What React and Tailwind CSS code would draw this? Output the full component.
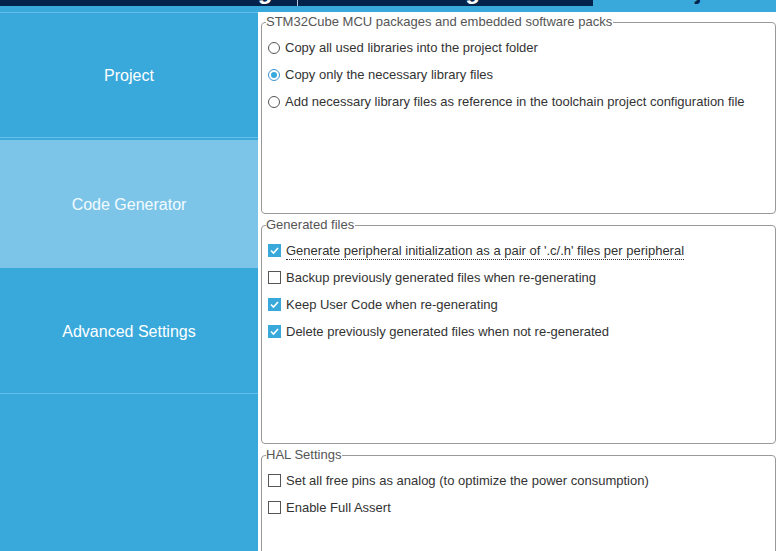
import React from "react";

const FONT = { fontFamily: '"Liberation Sans", Arial, sans-serif' };

function Radio({ checked, label }) {
  return (
    <div className="flex h-[27px] items-center gap-[5px] pl-[2px]">
      {checked ? (
        <span className="flex h-[12px] w-[12px] shrink-0 items-center justify-center rounded-full border border-[#3f93d2] bg-white">
          <span className="h-[6px] w-[6px] rounded-full bg-[#39a9db]" />
        </span>
      ) : (
        <span className="h-[12px] w-[12px] shrink-0 rounded-full border border-[#555555] bg-white" />
      )}
      <span className="whitespace-nowrap text-[13px] leading-[16px] text-[#333333]">{label}</span>
    </div>
  );
}

function Check({ checked, label, focused }) {
  return (
    <div className="flex h-[27px] items-center gap-[5px] pl-[2px]">
      {checked ? (
        <span className="flex h-[13px] w-[13px] shrink-0 items-center justify-center bg-[#39a9db]">
          <svg width="11" height="11" viewBox="0 0 11 11">
            <path d="M2 5.5 L4.5 8 L9 3" fill="none" stroke="#ffffff" strokeWidth="1.6" />
          </svg>
        </span>
      ) : (
        <span className="h-[13px] w-[13px] shrink-0 border border-[#555555] bg-white" />
      )}
      <span
        className={
          focused
            ? "whitespace-nowrap border-b border-dotted border-[#333333] pt-[1px] text-[13px] leading-[16px] text-[#333333]"
            : "whitespace-nowrap text-[13px] leading-[16px] text-[#333333]"
        }
      >
        {label}
      </span>
    </div>
  );
}

function Group({ title, heightClass, children }) {
  return (
    <fieldset
      className={
        "min-w-0 shrink-0 rounded-[4px] border border-[#9a9a9a] px-[4px] " + heightClass
      }
    >
      <legend className="pr-[1px] text-[13px] leading-[16px] text-[#555555]">{title}</legend>
      <div className="pt-[4px]">{children}</div>
    </fieldset>
  );
}

function Tab({ label, widthClass, padClass, dark }) {
  return (
    <div
      className={
        "h-[6px] shrink-0 overflow-hidden " +
        widthClass +
        (dark ? " bg-[#03234b] text-white" : " bg-[#39a9db] text-[#03234b]")
      }
    >
      <div
        className={"-translate-y-[23px] whitespace-nowrap text-[24px] font-bold leading-[28px] " + padClass}
      >
        {label}
      </div>
    </div>
  );
}

export default function App() {
  return (
    <div className="flex h-[551px] w-[776px] flex-col overflow-hidden bg-white" style={FONT}>
      <div className="flex h-[6px] shrink-0 bg-[#03234b]">
        <Tab label="Pinout & Configuration" widthClass="w-[297px]" padClass="pl-[91px]" dark />
        <div className="h-[6px] w-px shrink-0 bg-[#b9c6d6]" />
        <Tab label="Clock Configuration" widthClass="w-[295px]" padClass="pl-[34px]" dark />
        <Tab label="Project Manager" widthClass="flex-1" padClass="pl-[62px]" />
      </div>
      <div className="h-[6px] shrink-0 bg-[#39a9db]" />
      <div className="flex min-h-0 flex-1 overflow-hidden">
        <div className="flex w-[258px] shrink-0 flex-col bg-[#39a9db] text-[16px] text-white">
          <div className="h-px shrink-0 bg-[#66bfea]" />
          <div className="flex h-[124px] shrink-0 items-center justify-center pt-[2px]">Project</div>
          <div className="h-px shrink-0 bg-[#66bfea]" />
          <div className="h-[2px] shrink-0" />
          <div className="flex h-[128px] shrink-0 items-center justify-center bg-[#7cc5e9] pt-[2px] text-[#f4fbff]">
            Code Generator
          </div>
          <div className="flex h-[125px] shrink-0 items-center justify-center pt-[2px]">Advanced Settings</div>
          <div className="h-px shrink-0 bg-[#66bfea]" />
        </div>
        <div className="flex min-w-0 flex-1 flex-col gap-[3px] pl-[3px] pt-[2px]">
          <Group title="STM32Cube MCU packages and embedded software packs" heightClass="h-[200px]">
            <Radio label="Copy all used libraries into the project folder" />
            <Radio checked label="Copy only the necessary library files" />
            <Radio label="Add necessary library files as reference in the toolchain project configuration file" />
          </Group>
          <Group title="Generated files" heightClass="h-[227px]">
            <Check checked focused label="Generate peripheral initialization as a pair of '.c/.h' files per peripheral" />
            <Check label="Backup previously generated files when re-generating" />
            <Check checked label="Keep User Code when re-generating" />
            <Check checked label="Delete previously generated files when not re-generated" />
          </Group>
          <Group title="HAL Settings" heightClass="h-[150px]">
            <Check label="Set all free pins as analog (to optimize the power consumption)" />
            <Check label="Enable Full Assert" />
          </Group>
        </div>
      </div>
    </div>
  );
}
